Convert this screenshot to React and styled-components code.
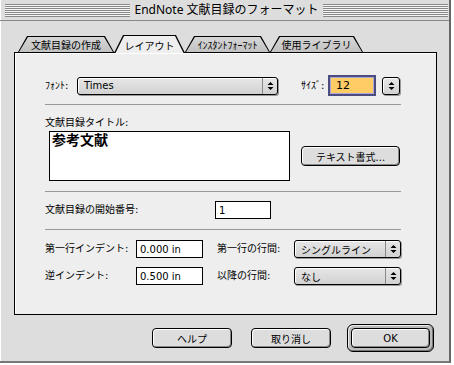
import React from 'react';
import styled, { createGlobalStyle } from 'styled-components';

const GlobalStyle = createGlobalStyle`
	html, body {
		margin: 0;
		padding: 0;
		background: #ffffff;
	}
	body {
		font-family: "DejaVu Sans", "Noto Sans CJK JP", sans-serif;
		font-size: 10px;
		color: #000;
	}
`;

const Window = styled.div`
	width: 451px;
	height: 363px;
	box-sizing: border-box;
	background: #dddddd;
	border-right: 2px solid #666;
	border-bottom: 2px solid #777;
	box-shadow: inset 1px 0 #fff;
	display: flex;
	flex-direction: column;
`;

const TitleBar = styled.div`
	height: 20px;
	border-bottom: 1px solid #888;
	display: flex;
	align-items: center;
	padding: 0 1px 0 5px;
`;

const Stripes = styled.div`
	flex: 1;
	height: 13px;
	background: repeating-linear-gradient(to bottom, #888 0 1px, #f6f6f6 1px 2px);
`;

const TitleText = styled.div`
	padding: 0 4px;
	font-family: "Noto Sans", "Noto Sans CJK JP", sans-serif;
	font-size: 12px;
	line-height: 14px;
	white-space: nowrap;
`;

const TabsRow = styled.div`
	position: relative;
	z-index: 1;
	display: flex;
	align-items: flex-end;
	margin-top: 14px;
	padding-left: 18px;
	height: 17px;
`;

const TAB_SHAPE = 'polygon(9px 0, calc(100% - 9px) 0, 100% 100%, 0 100%)';

const Tab = styled.div`
	box-sizing: border-box;
	width: ${p => p.$w}px;
	height: ${p => (p.$active ? 18 : 16)}px;
	margin-bottom: ${p => (p.$active ? -1 : 0)}px;
	padding: 1px 1px 0;
	background: #000;
	clip-path: ${TAB_SHAPE};
`;

const TabFace = styled.div`
	height: 100%;
	display: flex;
	align-items: center;
	justify-content: center;
	background: ${p => (p.$active ? '#eeeeee' : 'linear-gradient(to bottom, #d6d6d6, #c2c2c2)')};
	clip-path: ${TAB_SHAPE};
	white-space: nowrap;
	padding-top: ${p => (p.$active ? 1 : 0)}px;
`;

const Panel = styled.div`
	box-sizing: border-box;
	margin-left: 14px;
	width: 423px;
	height: 263px;
	border: 1px solid #000;
	background: #eeeeee;
	box-shadow: inset 1px 1px #fff;
	padding: 0 35px 0 30px;
	display: flex;
	flex-direction: column;
`;

const Row = styled.div`
	display: flex;
	align-items: center;
	height: ${p => p.$h}px;
	margin-top: ${p => p.$mt || 0}px;
`;

const Label = styled.div`
	width: ${p => (p.$w ? `${p.$w}px` : 'auto')};
	margin-left: ${p => p.$ml || 0}px;
	white-space: nowrap;
	line-height: 12px;
	flex-shrink: 0;
`;

const Separator = styled.div`
	height: 1px;
	background: #999;
	margin-top: ${p => p.$mt}px;
`;

const Popup = styled.div`
	box-sizing: border-box;
	display: flex;
	align-items: center;
	width: ${p => p.$w}px;
	height: 18px;
	margin-left: ${p => p.$ml || 0}px;
	border: 1px solid #000;
	border-radius: 3px;
	background: linear-gradient(to bottom, #e6e6e6, #d2d2d2);
	box-shadow: 1px 1px 0 #999, inset 1px 1px #fff;
	flex-shrink: 0;
`;

const PopupText = styled.div`
	flex: 1;
	padding-left: 6px;
	white-space: nowrap;
	overflow: hidden;
`;

const PopupArrow = styled.div`
	width: 15px;
	height: 100%;
	display: flex;
	align-items: center;
	justify-content: center;
	border-left: ${p => (p.$alone ? 'none' : '1px solid #888')};
	box-sizing: border-box;
	${p => p.$alone && 'flex: 1;'}
`;

const SizeField = styled.div`
	box-sizing: border-box;
	width: 48px;
	height: 21px;
	border: 2px solid #4c4c80;
	box-shadow: inset 0 0 0 1px #a8a8d8;
	background: #ffcc66;
	display: flex;
	align-items: center;
	padding-left: 6px;
	font-size: 11px;
	flex-shrink: 0;
`;

const TextBox = styled.div`
	box-sizing: border-box;
	width: 241px;
	height: 50px;
	margin-left: 4px;
	border: 1px solid #000;
	background: #fff;
	padding-left: 2px;
	flex-shrink: 0;
`;

const TitleValue = styled.div`
	font-family: "Noto Sans CJK JP", sans-serif;
	font-weight: 700;
	font-size: 14px;
	line-height: 15px;
`;

const Field = styled.div`
	box-sizing: border-box;
	width: ${p => p.$w}px;
	height: 18px;
	border: 1px solid #000;
	background: #fff;
	display: flex;
	align-items: center;
	padding-left: 3px;
	white-space: nowrap;
	flex-shrink: 0;
`;

const Button = styled.div`
	box-sizing: border-box;
	width: ${p => p.$w}px;
	height: 20px;
	margin-left: ${p => p.$ml || 0}px;
	border: 1px solid #000;
	border-radius: 4px;
	background: #dddddd;
	box-shadow: inset 1px 1px #fff, inset -1px -1px #888;
	display: flex;
	align-items: center;
	justify-content: center;
	white-space: nowrap;
	flex-shrink: 0;
`;

const IndentGrid = styled.div`
	display: grid;
	grid-template-columns: 91px 67px 14px 77px 107px;
	grid-auto-rows: 18px;
	row-gap: 9px;
	align-items: center;
	margin-top: 10px;
`;

const ButtonBar = styled.div`
	display: flex;
	justify-content: flex-end;
	align-items: center;
	margin-top: 9px;
	padding-right: 15px;
`;

const DefaultRing = styled.div`
	margin-left: 16px;
	padding: 3px;
	border: 1px solid #000;
	border-radius: 6px;
	background: #bbbbbb;
	box-shadow: inset 1px 1px #eee, inset -1px -1px #777;
`;

function Arrows() {
	return (
		<svg width="7" height="10" viewBox="0 0 7 10">
			<path d="M0.5 4 L3.5 1 L6.5 4 Z M0.5 6 L3.5 9 L6.5 6 Z" fill="#000" />
		</svg>
	);
}

const tabs = [
	{ label: '文献目録の作成', w: 96 },
	{ label: 'レイアウト', w: 71, active: true },
	{ label: 'ｲﾝｽﾀﾝﾄﾌｫｰﾏｯﾄ', w: 85 },
	{ label: '使用ライブラリ', w: 93 },
];

export default function App() {
	return (
		<>
			<GlobalStyle />
			<Window>
				<TitleBar>
					<Stripes />
					<TitleText>EndNote 文献目録のフォーマット</TitleText>
					<Stripes />
				</TitleBar>

				<TabsRow>
					{tabs.map(t => (
						<Tab key={t.label} $w={t.w} $active={t.active}>
							<TabFace $active={t.active}>{t.label}</TabFace>
						</Tab>
					))}
				</TabsRow>

				<Panel>
					<Row $h={21} $mt={22}>
						<Label $w={32}>ﾌｫﾝﾄ:</Label>
						<Popup $w={201}>
							<PopupText>Times</PopupText>
							<PopupArrow><Arrows /></PopupArrow>
						</Popup>
						<Label $w={27} $ml={23}>ｻｲｽﾞ:</Label>
						<SizeField>12</SizeField>
						<Popup $w={18} $ml={6}>
							<PopupArrow $alone><Arrows /></PopupArrow>
						</Popup>
					</Row>

					<Separator $mt={8} />

					<Row $h={12} $mt={12}>
						<Label>文献目録タイトル:</Label>
					</Row>
					<Row $h={50} $mt={2}>
						<TextBox>
							<TitleValue>参考文献</TitleValue>
						</TextBox>
						<Button $w={99} $ml={11}>テキスト書式...</Button>
					</Row>

					<Separator $mt={10} />

					<Row $h={18} $mt={9}>
						<Label $w={170}>文献目録の開始番号:</Label>
						<Field $w={56}>1</Field>
					</Row>

					<Separator $mt={10} />

					<IndentGrid>
						<Label>第一行インデント:</Label>
						<Field $w={67}>0.000 in</Field>
						<span />
						<Label>第一行の行間:</Label>
						<Popup $w={107}>
							<PopupText>シングルライン</PopupText>
							<PopupArrow><Arrows /></PopupArrow>
						</Popup>

						<Label>逆インデント:</Label>
						<Field $w={67}>0.500 in</Field>
						<span />
						<Label>以降の行間:</Label>
						<Popup $w={107}>
							<PopupText>なし</PopupText>
							<PopupArrow><Arrows /></PopupArrow>
						</Popup>
					</IndentGrid>
				</Panel>

				<ButtonBar>
					<Button $w={80}>ヘルプ</Button>
					<Button $w={80} $ml={19}>取り消し</Button>
					<DefaultRing>
						<Button $w={79}>OK</Button>
					</DefaultRing>
				</ButtonBar>
			</Window>
		</>
	);
}
